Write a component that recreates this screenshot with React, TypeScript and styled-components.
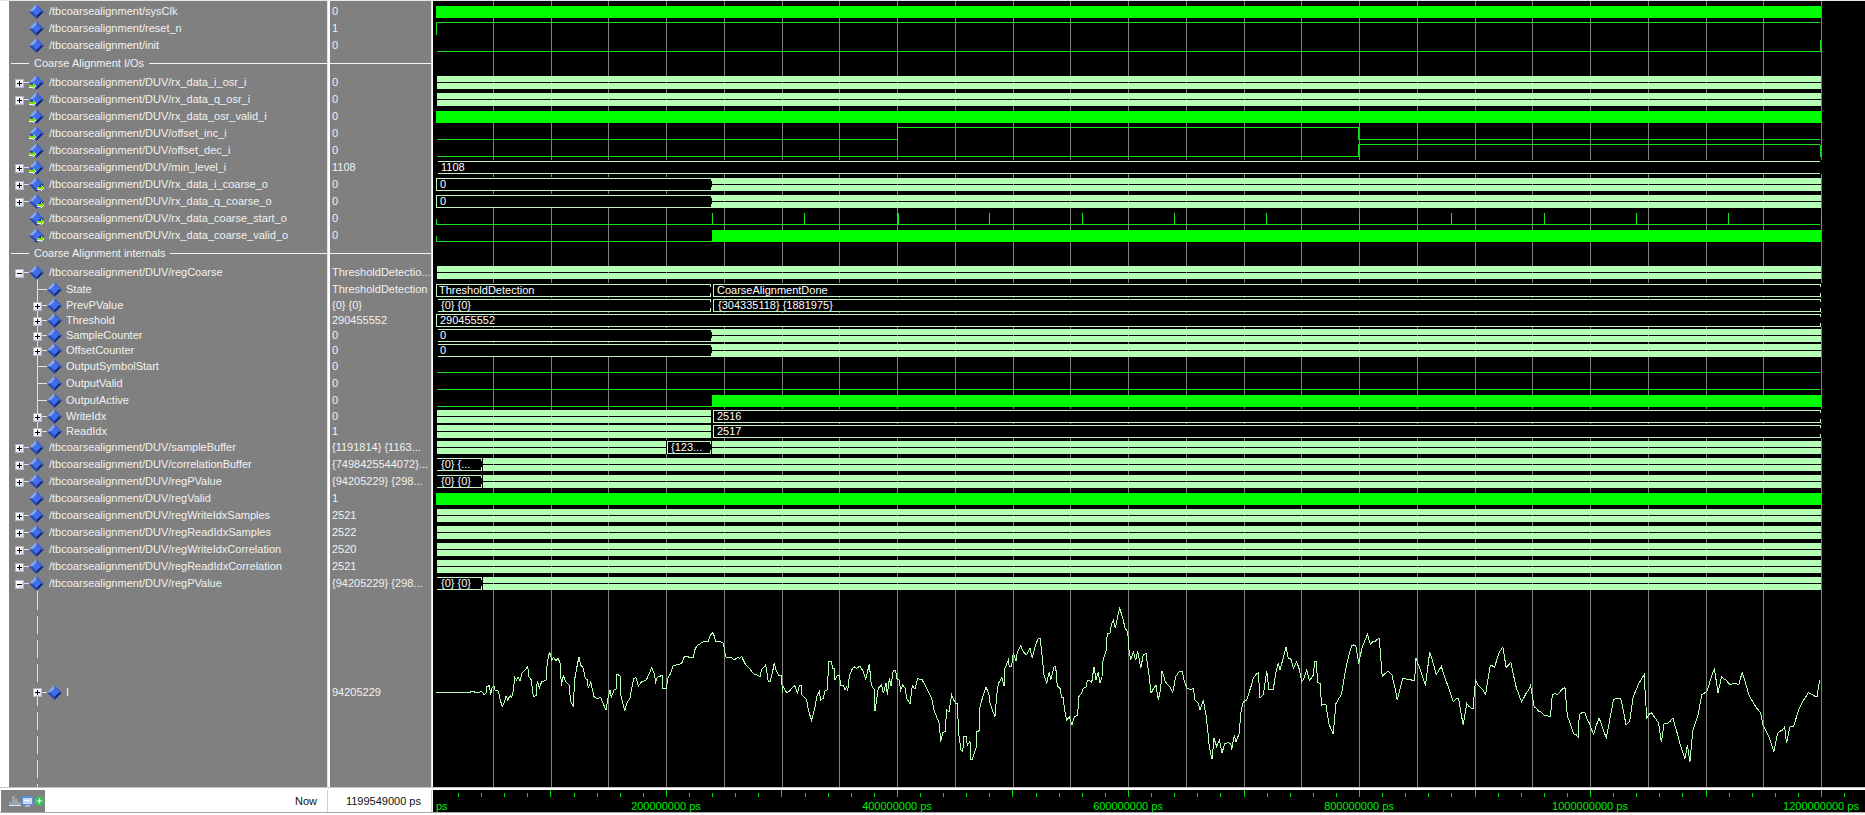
import React from "react";
import styled, { createGlobalStyle } from "styled-components";

const FONT = `"Liberation Sans", Tahoma, sans-serif`;

const Global = createGlobalStyle`
  html, body { margin: 0; padding: 0; background: #fff; overflow: hidden; }
  body { font-family: ${FONT}; font-size: 11px; }
`;

const Window = styled.div`
  width: 1865px; height: 815px; display: flex; flex-direction: column; background: #fff;
  border-top: 1px solid #e8e8e8; box-sizing: border-box; overflow: hidden;
`;
const Main = styled.div`display: flex; height: 786px; flex: none;`;
const NamePane = styled.div`
  width: 318px; margin-left: 9px; background: #808080; flex: none; display: flex; flex-direction: column; overflow: hidden;
`;
const Sash = styled.div<{ $w: number }>`
  width: ${(p) => p.$w}px; flex: none; background: #fff; box-shadow: inset 1px 0 0 #e4e4e4;
`;
const ValuePane = styled.div`
  width: 101px; background: #808080; flex: none; display: flex; flex-direction: column; overflow: hidden;
`;
const WavePane = styled.div`flex: 1; background: #000; overflow: hidden; display: flex;`;

const Spacer = styled.div`height: 2px; flex: none;`;
const Row = styled.div<{ $h: number }>`
  height: ${(p) => p.$h}px; flex: none; display: flex; align-items: center; color: #f2f2f2;
  white-space: nowrap; line-height: 13px;
`;
const Indent = styled.div`width: 19px; flex: none; align-self: stretch;`;
const treeColor = "#e2e2e2";
const Gutter = styled.div<{ $w: number; $tree?: "full" | "end" | "dash" | "none"; $stub?: boolean }>`
  width: ${(p) => p.$w}px; flex: none; align-self: stretch; display: flex; align-items: center; justify-content: center;
  background-repeat: no-repeat;
  background-image:
    ${(p) => (p.$stub ? `linear-gradient(${treeColor},${treeColor})` : "none")},
    ${(p) =>
      p.$tree === "dash"
        ? `repeating-linear-gradient(180deg, ${treeColor} 0 18px, transparent 18px 24px)`
        : p.$tree === "full" || p.$tree === "end"
          ? `linear-gradient(${treeColor},${treeColor})`
          : "none"};
  background-size: 50% 1px, 1px ${(p) => (p.$tree === "end" ? "50%" : "100%")};
  background-position: 100% 50%, 50% 0;
`;
const Expander = styled.div`
  width: 9px; height: 9px; box-sizing: border-box; border: 1px solid #b4b4c4; flex: none;
  background: linear-gradient(135deg, #ffffff 30%, #d4d4ee 100%);
  margin-top: 1px;
`;
const Sign = styled.svg`display: block; width: 7px; height: 7px;`;
const IconSlot = styled.div<{ $stem?: boolean; $w: number }>`
  width: ${(p) => p.$w}px; height: 100%; flex: none; display: flex; align-items: center;
  background-repeat: no-repeat;
  background-image: ${(p) => (p.$stem ? `linear-gradient(${treeColor},${treeColor})` : "none")};
  background-size: 1px 50%;
  background-position: 8px 100%;
`;
const DiamondSvg = styled.svg`display: block; overflow: visible;`;
const NameText = styled.span<{ $lvl: number }>`
  margin-left: ${(p) => (p.$lvl === 2 ? 4 : 5)}px;
`;
const DividerRow = styled.div`
  height: 20px; flex: none; display: flex; align-items: center; color: #f2f2f2; padding-bottom: 2px; box-sizing: border-box; gap: 5px; padding-left: 2px;
`;
const DividerLine = styled.div<{ $w?: number }>`
  height: 1px; background: #f2f2f2; flex: ${(p) => (p.$w ? `0 0 ${p.$w}px` : 1)};
`;
const ValueDivider = styled.div`
  height: 20px; flex: none; display: flex; align-items: center; padding-bottom: 2px; box-sizing: border-box;
`;
const ValueText = styled.span`padding-left: 2px;`;

const Footer = styled.div`
  height: 28px; flex: none; display: flex; flex-direction: column; background: #fff; border-top: 1px solid #c4c4c4; box-sizing: border-box;
`;
const FooterGap = styled.div`height: 2px; flex: none;`;
const FooterRow = styled.div`
  height: 22px; flex: none; display: flex; border-bottom: 1px solid #a8a8a8; box-sizing: content-box; color: #111;
`;
const Tools = styled.div`
  width: 44px; margin-left: 1px; background: #808080; flex: none; display: flex; align-items: center; gap: 1px; padding-left: 8px; box-sizing: border-box;
`;
const NowLabel = styled.div`
  width: 282px; flex: none; text-align: right; padding-right: 10px; box-sizing: border-box; line-height: 22px; font-size: 11px;
`;
const FooterSash = styled.div<{ $w: number }>`
  width: ${(p) => p.$w}px; flex: none; box-sizing: border-box; background: #fff; border-left: 1px solid #d0d0d0;
`;
const NowValue = styled.div`
  width: 101px; flex: none; text-align: right; padding-right: 10px; box-sizing: border-box; line-height: 22px; font-size: 11px;
`;
const TimeAxis = styled.svg`display: block; flex: 1; height: 22px; background: #000;`;
const WaveSvg = styled.svg`display: block; width: 1432px; height: 786px;`;
const BusLabel = styled.text`
  font-family: ${FONT}; font-size: 11px; fill: #fff;
`;
const AxisLabel = styled.text`
  font-family: ${FONT}; font-size: 11px; fill: #00ee00;
`;

type Dir = "none" | "in" | "out";
type Item =
  | { kind: "div"; label: string }
  | {
      kind: "sig";
      name: string;
      value: string;
      lvl?: 1 | 2;
      h?: number;
      dir?: Dir;
      exp?: "+" | "-";
      tree?: "full" | "end" | "dash";
      stem?: boolean;
    };

const P = "/tbcoarsealignment/DUV/";
const items: Item[] = [
  { kind: "sig", name: "/tbcoarsealignment/sysClk", value: "0" },
  { kind: "sig", name: "/tbcoarsealignment/reset_n", value: "1" },
  { kind: "sig", name: "/tbcoarsealignment/init", value: "0" },
  { kind: "div", label: "Coarse Alignment I/Os" },
  { kind: "sig", name: P + "rx_data_i_osr_i", value: "0", exp: "+", dir: "in" },
  { kind: "sig", name: P + "rx_data_q_osr_i", value: "0", exp: "+", dir: "in" },
  { kind: "sig", name: P + "rx_data_osr_valid_i", value: "0", dir: "in" },
  { kind: "sig", name: P + "offset_inc_i", value: "0", dir: "in" },
  { kind: "sig", name: P + "offset_dec_i", value: "0", dir: "in" },
  { kind: "sig", name: P + "min_level_i", value: "1108", exp: "+", dir: "in" },
  { kind: "sig", name: P + "rx_data_i_coarse_o", value: "0", exp: "+", dir: "out" },
  { kind: "sig", name: P + "rx_data_q_coarse_o", value: "0", exp: "+", dir: "out" },
  { kind: "sig", name: P + "rx_data_coarse_start_o", value: "0", dir: "out" },
  { kind: "sig", name: P + "rx_data_coarse_valid_o", value: "0", dir: "out" },
  { kind: "div", label: "Coarse Alignment internals" },
  { kind: "sig", name: P + "regCoarse", value: "ThresholdDetectio...", exp: "-", stem: true },
  { kind: "sig", name: "State", value: "ThresholdDetection", lvl: 2, tree: "full" },
  { kind: "sig", name: "PrevPValue", value: "{0} {0}", lvl: 2, tree: "full", exp: "+", h: 15 },
  { kind: "sig", name: "Threshold", value: "290455552", lvl: 2, tree: "full", exp: "+", h: 15 },
  { kind: "sig", name: "SampleCounter", value: "0", lvl: 2, tree: "full", exp: "+", h: 15 },
  { kind: "sig", name: "OffsetCounter", value: "0", lvl: 2, tree: "full", exp: "+", h: 15 },
  { kind: "sig", name: "OutputSymbolStart", value: "0", lvl: 2, tree: "full" },
  { kind: "sig", name: "OutputValid", value: "0", lvl: 2, tree: "full" },
  { kind: "sig", name: "OutputActive", value: "0", lvl: 2, tree: "full" },
  { kind: "sig", name: "WriteIdx", value: "0", lvl: 2, tree: "full", exp: "+", h: 15 },
  { kind: "sig", name: "ReadIdx", value: "1", lvl: 2, tree: "end", exp: "+", h: 15 },
  { kind: "sig", name: P + "sampleBuffer", value: "{1191814} {1163...", exp: "+" },
  { kind: "sig", name: P + "correlationBuffer", value: "{7498425544072}...", exp: "+" },
  { kind: "sig", name: P + "regPValue", value: "{94205229} {298...", exp: "+" },
  { kind: "sig", name: P + "regValid", value: "1" },
  { kind: "sig", name: P + "regWriteIdxSamples", value: "2521", exp: "+" },
  { kind: "sig", name: P + "regReadIdxSamples", value: "2522", exp: "+" },
  { kind: "sig", name: P + "regWriteIdxCorrelation", value: "2520", exp: "+" },
  { kind: "sig", name: P + "regReadIdxCorrelation", value: "2521", exp: "+" },
  { kind: "sig", name: P + "regPValue", value: "{94205229} {298...", exp: "-", stem: true },
  { kind: "sig", name: "I", value: "94205229", lvl: 2, tree: "dash", exp: "+", h: 200 },
];

function Arrow({ x }: { x: number }) {
  return (
    <g shapeRendering="crispEdges">
      <path d={`M${x} 10h4v-2h1v1h1v1h1v2h-1v1h-1v1h-1v-2h-4z`} fill="#7fe000" />
      <path d={`M${x} 12h4v1h-4z M${x + 4} 14h1v-1h1v-1h1v-1h-1z`} fill="#f4fff0" />
    </g>
  );
}

function Diamond({ dir = "none" }: { dir?: Dir }) {
  return (
    <DiamondSvg width="15" height="15" viewBox="0 0 15 15">
      <polygon points="7.5,0 7.5,3.5 3.5,7.5 0,7.5" fill="#86a8f8" />
      <polygon points="7.5,0 15,7.5 11.5,7.5 7.5,3.5" fill="#3f62d0" />
      <polygon points="15,7.5 7.5,15 7.5,11.5 11.5,7.5" fill="#0f2a8c" />
      <polygon points="0,7.5 3.5,7.5 7.5,11.5 7.5,15" fill="#2648b8" />
      <polygon points="7.5,3.5 11.5,7.5 7.5,11.5 3.5,7.5" fill="#3f6ff0" />
      {dir === "in" && <Arrow x={0} />}
      {dir === "out" && <Arrow x={8} />}
    </DiamondSvg>
  );
}

function Exp({ sign }: { sign: "+" | "-" }) {
  return (
    <Expander>
      <Sign viewBox="0 0 7 7" shapeRendering="crispEdges">
        <rect x="1" y="3" width="5" height="1" fill="#000" />
        {sign === "+" && <rect x="3" y="1" width="1" height="5" fill="#000" />}
      </Sign>
    </Expander>
  );
}

function NameRow({ it }: { it: Extract<Item, { kind: "sig" }> }) {
  const lvl = it.lvl ?? 1;
  return (
    <Row $h={it.h ?? 17}>
      {lvl === 2 && <Indent />}
      <Gutter $w={lvl === 2 ? 19 : 20} $tree={it.tree ?? "none"} $stub={!!it.exp || lvl === 2}>
        {it.exp && <Exp sign={it.exp} />}
      </Gutter>
      <IconSlot $w={15} $stem={it.stem}>
        <Diamond dir={it.dir} />
      </IconSlot>
      <NameText $lvl={lvl}>{it.name}</NameText>
    </Row>
  );
}

// ---- waveform data ----
const GREEN = "#00ff00";
const LOW = "#1fe01f";
const BUS = "#b4ffb4";
const LINE = "#c4f4c4";
const L = 437;
const R = 1820;

const gridXs = Array.from({ length: 24 }, (_, k) => Math.round(1821 - k * 57.75));

function Block({ x0 = 436, x1 = 1821, y }: { x0?: number; x1?: number; y: number }) {
  return <rect x={x0} y={y} width={x1 - x0} height={12} fill={GREEN} />;
}
function HL({ x0 = L, x1 = R, y, c = LOW }: { x0?: number; x1?: number; y: number; c?: string }) {
  return <rect x={x0} y={y} width={x1 - x0} height={1} fill={c} />;
}
function VL({ x, y0, y1, w = 1 }: { x: number; y0: number; y1: number; w?: number }) {
  return <rect x={x} y={y0} width={w} height={y1 - y0} fill={LOW} />;
}
function Bars({ x0 = L, x1 = 1821, y }: { x0?: number; x1?: number; y: number }) {
  return (
    <>
      <rect x={x0} y={y} width={x1 - x0} height={6} fill={BUS} />
      <rect x={x0} y={y + 7} width={x1 - x0} height={6} fill={BUS} />
    </>
  );
}
function Box({
  x0,
  x1,
  y,
  label,
  tx,
  open,
  end,
}: {
  x0: number;
  x1: number;
  y: number;
  label?: string;
  tx?: number;
  open?: boolean;
  end?: boolean;
}) {
  return (
    <>
      <rect x={x0 - 1} y={y - 1} width={x1 - x0 + 2} height={14} fill="#000" />
      <HL x0={x0 + 1} x1={x1 - 1} y={y} c={LINE} />
      <HL x0={x0 + 1} x1={x1 - 1} y={y + 12} c={LINE} />
      {!open && (
        <path
          d={`M${x0 + 1} ${y}h-1v2M${x0} ${y + 10}v2h1M${x0} ${y + 2}v8`}
          stroke={LINE}
          fill="none"
        />
      )}
      {end && <path d={`M${x1 - 2} ${y}h1v3M${x1 - 1} ${y + 9}v3h-1`} stroke={LINE} fill="none" />}
      {label && (
        <BusLabel x={tx ?? x0 + 4} y={y + 10}>
          {label}
        </BusLabel>
      )}
    </>
  );
}

const traceA: [number, number][] = [[0,277],[38,277],[42,285],[48,280],[50,260],[58,257],[62,285],[66,265],[72,257],[76,272],[85,273],[92,305],[97,319],[103,308],[108,288],[113,300],[120,287],[125,292],[130,273],[134,232],[140,240],[144,232],[150,242],[156,218],[165,210],[173,200],[177,230],[184,240],[190,290],[198,287],[202,242],[208,265],[215,245],[228,240],[232,185],[239,155],[245,180],[250,172],[258,183],[264,175],[271,190],[274,257],[280,227],[287,245],[297,255],[302,305],[310,318],[314,238],[322,195],[327,170],[332,195],[340,205],[346,236],[352,238],[355,265],[362,245],[372,290],[382,297],[392,292],[400,312],[408,330],[414,295],[420,270],[424,292],[432,270],[438,268],[441,222],[450,228],[453,288],[460,315],[464,332],[470,310],[480,295],[487,255],[492,235],[498,233],[505,258],[515,245],[530,238],[545,203],[553,222],[557,245],[562,232],[578,225],[579,265],[590,267],[592,238],[602,220],[610,195],[635,190],[643,170],[670,172],[676,145],[695,128],[715,125],[720,108],[727,97],[733,108],[737,125],[760,130],[767,170],[790,177],[815,170],[827,195],[845,215],[860,225],[870,230]];
const traceB: [number, number][] = [[35,208],[47,195],[55,245],[60,245],[67,220],[73,188],[78,210],[85,225],[95,228],[97,278],[100,260],[110,278],[125,265],[135,257],[142,280],[148,257],[154,257],[156,285],[170,300],[175,330],[185,362],[195,320],[200,290],[208,275],[212,300],[220,295],[225,272],[232,270],[236,185],[245,185],[247,205],[253,205],[255,240],[262,225],[268,225],[272,255],[280,255],[285,270],[290,260],[293,272],[298,228],[305,210],[312,200],[320,205],[330,198],[340,215],[347,238],[358,192],[364,255],[372,268],[375,332],[382,285],[385,265],[395,255],[400,280],[408,250],[412,285],[418,235],[423,258],[430,210],[437,210],[440,235],[447,240],[452,270],[458,255],[465,265],[470,295],[480,312],[487,257],[495,268],[503,235],[515,237],[530,265],[545,295],[552,330],[568,370],[572,425],[578,398],[585,395],[590,330],[597,335],[605,285],[617,310],[622,310],[626,400],[633,450],[638,455],[642,408],[648,408],[652,435],[660,425],[662,478],[667,478],[678,445],[680,395],[688,392],[690,320],[700,285],[708,260],[717,285],[720,310],[735,350],[740,285],[745,252],[755,232],[762,258],[765,205],[775,180],[778,200],[785,198],[790,160],[798,182],[802,158],[812,137],[820,155],[830,165],[840,145],[847,175],[855,140],[865,115],[870,115]];
const traceC: [number, number][] = [[35,155],[42,225],[50,250],[58,215],[62,240],[72,200],[77,200],[82,258],[90,265],[95,292],[100,292],[103,325],[110,360],[118,352],[126,375],[133,350],[143,345],[146,290],[155,280],[160,265],[168,262],[172,240],[185,248],[192,200],[198,240],[205,215],[210,250],[216,230],[218,185],[228,152],[232,100],[240,100],[245,70],[250,62],[256,85],[264,45],[269,25],[280,60],[285,85],[293,95],[297,150],[302,180],[310,155],[317,180],[323,152],[332,205],[340,165],[348,160],[357,225],[363,280],[378,255],[385,300],[392,265],[396,212],[406,245],[420,260],[428,278],[437,230],[447,215],[457,215],[463,245],[472,265],[482,270],[490,265],[495,300],[505,310],[510,330],[520,300],[528,345],[534,400],[538,440],[546,478],[552,415],[560,440],[568,420],[576,458],[585,430],[602,430],[605,450],[613,405],[618,425],[628,400],[632,340],[640,305],[650,300],[658,275],[670,235],[685,218],[690,293],[700,285],[710,212],[717,270],[730,268],[737,220],[745,190],[750,210],[758,180],[768,140],[775,175],[782,175],[790,205],[800,185],[808,208],[815,245],[822,235],[830,210],[838,240],[850,225],[854,185],[860,185],[862,248],[870,250]];
const traceD: [number, number][] = [[60,320],[72,318],[80,370],[92,400],[100,315],[115,290],[130,205],[143,155],[155,155],[163,205],[172,160],[187,122],[195,150],[220,135],[228,240],[245,225],[255,235],[270,305],[285,245],[318,250],[322,190],[335,225],[348,265],[360,172],[378,235],[392,212],[410,265],[425,310],[440,300],[453,375],[463,315],[480,330],[487,250],[500,270],[515,290],[528,210],[540,215],[552,175],[563,158],[572,215],[585,200],[600,270],[615,310],[640,265],[650,325],[675,345],[695,350],[700,290],[715,290],[735,270],[742,350],[760,400],[772,408],[775,345],[790,340],[803,370],[815,400],[830,355],[850,410],[870,305],[890,300],[905,375],[915,365],[925,295],[940,260],[955,235],[962,355],[975,340],[995,370],[1003,423],[1010,372],[1020,370],[1035,355],[1055,430],[1068,468],[1075,430],[1082,478],[1090,390],[1105,345],[1115,290],[1130,280],[1150,218],[1160,285],[1170,240],[1190,260],[1218,262],[1227,228],[1245,290],[1265,325],[1278,340],[1285,375],[1300,405],[1315,448],[1325,398],[1345,380],[1350,425],[1360,378],[1370,378],[1385,330],[1410,285],[1435,295],[1442,250]];

function toPts(t: [number, number][], bx: number, by: number, s: number): [number, number][] {
  return t.map(([x, y]) => [bx + x / s, by + y / s] as [number, number]);
}

// Polyline through the traced points, with a small deterministic sample ripple.
function buildAnalog() {
  const pts: [number, number][] = [
    [436, 692.5],
    ...toPts(traceA, 470, 600, 3),
    ...toPts(traceB, 750, 600, 3),
    ...toPts(traceC, 1030, 600, 3),
    ...toPts(traceD, 1300, 590, 2.775),
  ];
  let seed = 17;
  const rnd = () => {
    seed = (seed * 16807) % 2147483647;
    return seed / 2147483647 - 0.5;
  };
  let d = `M${pts[0][0]} ${pts[0][1]}`;
  for (let i = 1; i < pts.length; i++) {
    const [x0, y0] = pts[i - 1];
    const [x1, y1] = pts[i];
    const flat = x1 < 482;
    const n = Math.max(1, Math.floor((x1 - x0) / 2));
    for (let k = 1; k <= n; k++) {
      const t = k / n;
      const x = x0 + (x1 - x0) * t;
      const y = y0 + (y1 - y0) * t + (k === n || flat ? 0 : rnd() * 2);
      d += `L${x.toFixed(1)} ${y.toFixed(1)}`;
    }
  }
  return d;
}
const analog = buildAnalog();

const pulses = Array.from({ length: 13 }, (_, k) => Math.round(712 + k * 92.4));

function Waves() {
  return (
    <WaveSvg viewBox="433 1 1432 786" shapeRendering="crispEdges">
      {gridXs.map((x) => (
        <rect key={x} x={x} y={1} width={1} height={786} fill="#808080" />
      ))}
      <Block y={6} />
      <HL y={22} />
      <VL x={436} y0={22} y1={35} />
      <HL y={51} />
      <VL x={1820} y0={40} y1={52} />
      <Bars y={76} />
      <Bars y={93} />
      <Block y={111} />
      <HL y={139} x1={898} />
      <VL x={897} y0={127} y1={140} />
      <HL x0={897} x1={1359} y={127} />
      <VL x={1358} y0={127} y1={140} />
      <HL x0={1358} y={139} />
      <HL y={156} x1={1359} />
      <VL x={1358} y0={144} y1={157} />
      <HL x0={1358} y={144} />
      <VL x={1820} y0={145} y1={157} />
      <Box x0={437} x1={1821} y={161} label="1108" tx={441} open />
      <Box x0={436} x1={712} y={178} label="0" tx={440} end />
      <Bars x0={712} y={178} />
      <Box x0={436} x1={712} y={195} label="0" tx={440} end />
      <Bars x0={712} y={195} />
      <HL y={224} />
      <VL x={436} y0={219} y1={225} />
      {pulses.map((x, i) => (
        <VL key={x} x={x} y0={213} y1={224} w={i === 2 ? 2 : 1} />
      ))}
      <HL y={241} x1={712} />
      <VL x={436} y0={236} y1={242} />
      <Block x0={712} y={230} />
      <Bars y={266} />
      <Box x0={436} x1={711} y={284} label="ThresholdDetection" tx={439} end />
      <Box x0={713} x1={1821} y={284} label="CoarseAlignmentDone" tx={717} end />
      <Box x0={437} x1={711} y={299} label="{0} {0}" tx={441} open end />
      <Box x0={713} x1={1821} y={299} label="{304335118} {1881975}" tx={718} end />
      <Box x0={436} x1={1821} y={314} label="290455552" tx={440} end />
      <Box x0={437} x1={712} y={329} label="0" tx={440} open end />
      <Bars x0={712} y={329} />
      <Box x0={437} x1={712} y={344} label="0" tx={440} open end />
      <Bars x0={712} y={344} />
      <HL y={372} />
      <HL y={389} />
      <HL y={406} x1={712} />
      <Block x0={712} y={395} />
      <Bars x1={711} y={410} />
      <Box x0={713} x1={1821} y={410} label="2516" tx={717} end />
      <Bars x1={711} y={425} />
      <Box x0={713} x1={1821} y={425} label="2517" tx={717} end />
      <Bars x1={666} y={441} />
      <Box x0={667} x1={711} y={441} label="{123..." tx={671} end />
      <Bars x0={712} y={441} />
      <Box x0={436} x1={482} y={458} label="{0} {..." tx={441} open end />
      <Bars x0={483} y={458} />
      <Box x0={436} x1={482} y={475} label="{0} {0}" tx={441} open end />
      <Bars x0={483} y={475} />
      <Block y={493} />
      <Bars y={509} />
      <Bars y={526} />
      <Bars y={543} />
      <Bars y={560} />
      <Box x0={436} x1={482} y={577} label="{0} {0}" tx={441} open end />
      <Bars x0={483} y={577} />
      <path d={analog} fill="none" stroke={BUS} strokeWidth={1} />
    </WaveSvg>
  );
}

const axisTicks = Array.from({ length: 62 }, (_, k) => 1821 + 23.1 - k * 23.1);
const axisLabels = [
  { x: 666, t: "200000000 ps" },
  { x: 897, t: "400000000 ps" },
  { x: 1128, t: "600000000 ps" },
  { x: 1359, t: "800000000 ps" },
  { x: 1590, t: "1000000000 ps" },
  { x: 1821, t: "1200000000 ps" },
];

function Axis() {
  return (
    <TimeAxis viewBox="433 0 1432 22" shapeRendering="crispEdges">
      {axisTicks.map((x, i) =>
        x > 436 ? (
          <rect key={i} x={Math.round(x)} y={(i - 1) % 5 === 0 ? 0 : 3} width={1} height={(i - 1) % 5 === 0 ? 7 : 4} fill="#00e000" />
        ) : null,
      )}
      <AxisLabel x={436} y={20}>
        ps
      </AxisLabel>
      {axisLabels.map((l) => (
        <AxisLabel key={l.t} x={l.x} y={20} textAnchor="middle">
          {l.t}
        </AxisLabel>
      ))}
    </TimeAxis>
  );
}

export default function App() {
  return (
    <Window>
      <Global />
      <Main>
        <NamePane>
          <Spacer />
          {items.map((it, i) =>
            it.kind === "div" ? (
              <DividerRow key={i}>
                <DividerLine $w={18} />
                <span>{it.label}</span>
                <DividerLine />
              </DividerRow>
            ) : (
              <NameRow key={i} it={it} />
            ),
          )}
        </NamePane>
        <Sash $w={3} />
        <ValuePane>
          <Spacer />
          {items.map((it, i) =>
            it.kind === "div" ? (
              <ValueDivider key={i}>
                <DividerLine />
              </ValueDivider>
            ) : (
              <Row key={i} $h={it.h ?? 17}>
                <ValueText>{it.value}</ValueText>
              </Row>
            ),
          )}
        </ValuePane>
        <Sash $w={2} />
        <WavePane>
          <Waves />
        </WavePane>
      </Main>
      <Footer>
        <FooterGap />
        <FooterRow>
          <Tools>
            <svg width="12" height="14" viewBox="0 0 12 14" shapeRendering="crispEdges">
              <path d="M3 2h3v3h3v3h3v3H0V8h3z" fill="#9aa4b0" />
              <path d="M0 11h12v1H0z" fill="#dfe6ee" />
            </svg>
            <svg width="11" height="14" viewBox="0 0 11 14" shapeRendering="crispEdges">
              <rect y="2" width="11" height="9" fill="#5f8fd8" />
              <rect x="1" y="4" width="9" height="6" fill="#c8dcf4" />
              <rect x="2" y="6" width="5" height="1" fill="#fff" />
              <rect x="3" y="11" width="5" height="2" fill="#9ab8e0" />
            </svg>
            <svg width="11" height="14" viewBox="0 0 11 14">
              <circle cx="5.5" cy="7" r="5" fill="#3fbf5f" />
              <path d="M5.5 4.5v5M3 7h5" stroke="#fff" strokeWidth="1" />
            </svg>
          </Tools>
          <NowLabel>Now</NowLabel>
          <FooterSash $w={3} />
          <NowValue>1199549000 ps</NowValue>
          <FooterSash $w={2} />
          <Axis />
        </FooterRow>
      </Footer>
    </Window>
  );
}
